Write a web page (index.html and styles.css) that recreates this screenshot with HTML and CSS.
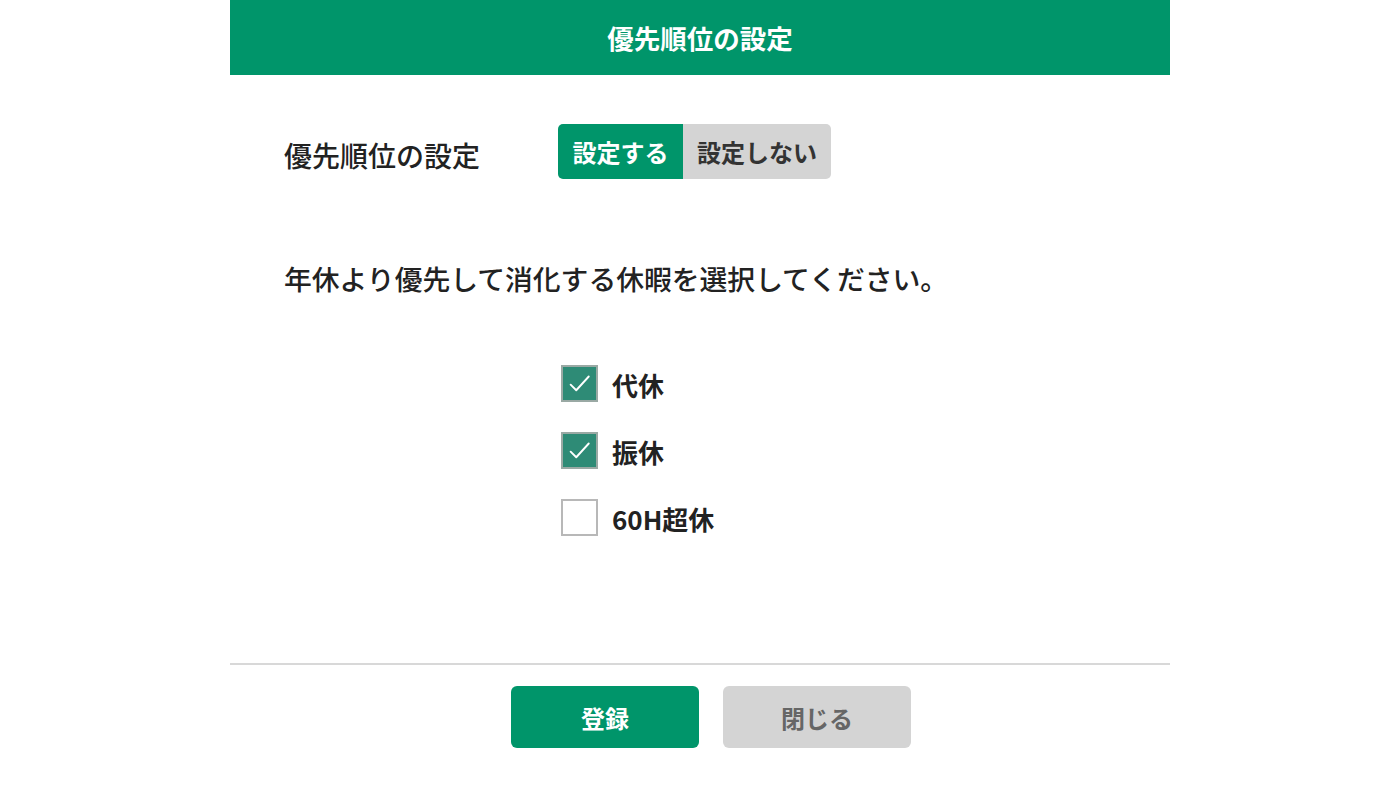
FILE: index.html
```html
<!doctype html>
<html lang="ja">
  <head>
    <meta charset="UTF-8" />
    <meta name="viewport" content="width=device-width, initial-scale=1.0" />
    <title>優先順位の設定</title>
    <link rel="stylesheet" href="styles.css">
  </head>
  <body>
    <div class="modal">
      <div class="modal-header">
        <h1>優先順位の設定</h1>
      </div>

      <div class="modal-body">
        <div class="setting-row">
          <span class="setting-label">優先順位の設定</span>
          <div class="toggle">
            <button type="button" class="toggle-btn active">設定する</button>
            <button type="button" class="toggle-btn">設定しない</button>
          </div>
        </div>

        <p class="instruction">年休より優先して消化する休暇を選択してください。</p>

        <ul class="leave-list">
          <li class="leave-item">
            <span class="check checked">
              <svg viewBox="0 0 24 24"><path d="M4.5 12.5l4.5 4.5 10-11" /></svg>
            </span>
            <span class="leave-name">代休</span>
          </li>
          <li class="leave-item">
            <span class="check checked">
              <svg viewBox="0 0 24 24"><path d="M4.5 12.5l4.5 4.5 10-11" /></svg>
            </span>
            <span class="leave-name">振休</span>
          </li>
          <li class="leave-item">
            <span class="check"></span>
            <span class="leave-name">60H超休</span>
          </li>
        </ul>
      </div>

      <div class="modal-footer">
        <button type="button" class="btn btn-primary">登録</button>
        <button type="button" class="btn btn-disabled">閉じる</button>
      </div>
    </div>
  </body>
</html>
```

FILE: styles.css
```css
* {
  margin: 0;
  padding: 0;
  box-sizing: border-box;
  font-family: "Noto Sans CJK JP", "Noto Sans", sans-serif;
}

body {
  background-color: #fff;
  color: #222;
}

.modal {
  width: 940px;
  margin: 0 auto;
  background-color: #fff;
}

.modal-header {
  height: 75px;
  background-color: #00956a;
  display: flex;
  align-items: center;
  justify-content: center;
}

.modal-header h1 {
  font-size: 26.5px;
  font-weight: 700;
  color: #fff;
}

.modal-body {
  padding: 49px 54px 127px;
}

.setting-row {
  display: flex;
  align-items: center;
}

.setting-label {
  width: 274px;
  font-size: 28px;
  font-weight: 500;
  padding-top: 6px;
}

.toggle {
  display: flex;
}

.toggle-btn {
  height: 55px;
  width: 148px;
  border: none;
  font-size: 24px;
  font-weight: 700;
  background-color: #d4d4d4;
  color: #333;
  border-radius: 0 5px 5px 0;
}

.toggle-btn.active {
  width: 125px;
  background-color: #00956a;
  color: #fff;
  border-radius: 5px 0 0 5px;
}

.instruction {
  margin-top: 79px;
  font-size: 27.8px;
  line-height: 40px;
  font-weight: 500;
}

.leave-list {
  list-style: none;
  margin-top: 67px;
  padding-left: 277px;
  display: flex;
  flex-direction: column;
  gap: 30px;
}

.leave-item {
  display: flex;
  align-items: center;
  height: 37px;
}

.check {
  width: 37px;
  height: 37px;
  border: 2px solid #b8b8b8;
  background-color: #fff;
  display: flex;
  align-items: center;
  justify-content: center;
}

.check.checked {
  background-color: #2e8b76;
  border-color: #9aa9a4;
}

.check svg {
  width: 30px;
  height: 30px;
  fill: none;
  stroke: #fff;
  stroke-width: 1.5;
  stroke-linecap: round;
  stroke-linejoin: round;
}

.leave-name {
  margin-left: 14px;
  font-size: 26px;
  font-weight: 700;
  padding-top: 2px;
}

.modal-footer {
  border-top: 2px solid #d8d8d8;
  padding: 21px 0 0 22px;
  display: flex;
  justify-content: center;
  gap: 24px;
}

.btn {
  width: 188px;
  height: 62px;
  border: none;
  border-radius: 6px;
  font-size: 24px;
  font-weight: 700;
}

.btn-primary {
  background-color: #00956a;
  color: #fff;
}

.btn-disabled {
  background-color: #d4d4d4;
  color: #666;
}
```
